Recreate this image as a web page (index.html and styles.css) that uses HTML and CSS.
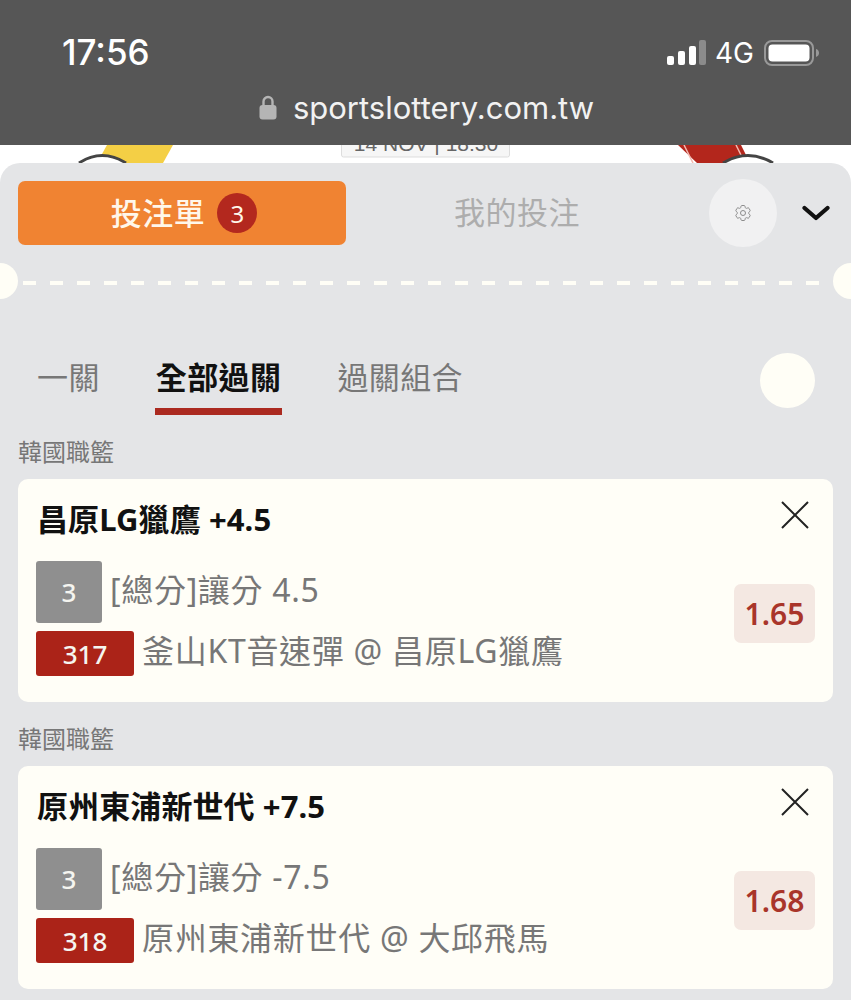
FILE: index.html
```html
<!DOCTYPE html>
<html lang="zh-Hant">
<head>
    <meta charset="UTF-8">
    <meta name="viewport" content="width=device-width, initial-scale=1.0">
    <title>sportslottery.com.tw</title>
    <link rel="stylesheet" href="styles.css">
</head>
<body>

    <!-- phone status bar and address -->
    <div class="phone-top">
        <div class="status">
            <div class="time">17:56</div>
            <div class="status-right">
                <svg class="signal" width="39" height="25" viewBox="0 0 39 25">
                    <rect x="0" y="16" width="7" height="9" rx="2" fill="#fff"/>
                    <rect x="11" y="11" width="7" height="14" rx="2" fill="#fff"/>
                    <rect x="22" y="6" width="7" height="19" rx="2" fill="#fff"/>
                    <rect x="32" y="0" width="7" height="25" rx="2" fill="#8b8b8b"/>
                </svg>
                <span class="network">4G</span>
                <svg class="battery" width="55" height="26" viewBox="0 0 55 26">
                    <rect x="1" y="1" width="48" height="24" rx="7" fill="none" stroke="#999" stroke-width="2"/>
                    <rect x="4.500" y="4.500" width="41" height="17" rx="4" fill="#fff"/>
                    <path d="M52 9c2 .6 3 2.200 3 4s-1 3.400-3 4z" fill="#999"/>
                </svg>
            </div>
        </div>
        <div class="address">
            <svg class="lock" width="18" height="25" viewBox="0 0 18 25">
                <path d="M4.500 11V6.500a4.500 4.500 0 0 1 9 0V11" fill="none" stroke="#b5b5b5" stroke-width="2.400"/>
                <rect x="0.500" y="10" width="17" height="14.500" rx="3" fill="#b5b5b5"/>
            </svg>
            <span>sportslottery.com.tw</span>
        </div>
    </div>

    <!-- bit of the match page showing behind the sheet -->
    <div class="behind">
        <svg width="851" height="18" viewBox="0 0 851 18">
            <polygon points="107,0 173,0 163,18 97,18" fill="#f4cf45"/>
            <path d="M79 18Q102 3 126 18" fill="#fff" stroke="#444" stroke-width="3"/>
            <rect x="341.500" y="-10" width="168" height="22" rx="2" fill="#f6f6f6" stroke="#ddd"/>
            <text class="behind-date" x="426" y="6" text-anchor="middle">14 NOV | 18:30</text>
            <polygon points="678,0 741,0 750,18 697,18" fill="#b3261c"/>
            <path d="M684 0L693 18M736 0L745 18" stroke="#f2b9b0" stroke-width="1.500"/>
            <path d="M723 18Q748 3 773 18" fill="#fff" stroke="#444" stroke-width="3"/>
        </svg>
    </div>

    <div class="sheet">
        <div class="sheet-head">
            <button class="slip-tab"><span class="slip-label">投注單</span> <span class="count">3</span></button>
            <div class="my-bets">我的投注</div>
            <div class="gear">
                <svg width="20" height="20" viewBox="0 0 24 24" fill="none" stroke="#8c8c8c" stroke-width="1.200">
                    <path d="M9.594 3.940c.090-.542.560-.940 1.110-.940h2.593c.550 0 1.020.398 1.110.940l.213 1.281c.063.374.313.686.645.870.074.040.147.083.220.127.325.196.720.257 1.075.124l1.217-.456a1.125 1.125 0 0 1 1.370.490l1.296 2.247a1.125 1.125 0 0 1-.260 1.431l-1.003.827c-.293.241-.438.613-.430.992a7.723 7.723 0 0 1 0 .255c-.008.378.137.750.430.991l1.004.827c.424.350.534.955.260 1.430l-1.298 2.247a1.125 1.125 0 0 1-1.369.491l-1.217-.456c-.355-.133-.750-.072-1.076.124a6.470 6.470 0 0 1-.220.128c-.331.183-.581.495-.644.869l-.213 1.281c-.090.543-.560.940-1.110.940h-2.594c-.550 0-1.019-.398-1.110-.940l-.213-1.281c-.062-.374-.312-.686-.644-.870a6.520 6.520 0 0 1-.220-.127c-.325-.196-.720-.257-1.076-.124l-1.217.456a1.125 1.125 0 0 1-1.369-.490l-1.297-2.247a1.125 1.125 0 0 1 .260-1.431l1.004-.827c.292-.240.437-.613.430-.991a6.932 6.932 0 0 1 0-.255c.007-.380-.138-.751-.430-.992l-1.004-.827a1.125 1.125 0 0 1-.260-1.430l1.297-2.247a1.125 1.125 0 0 1 1.370-.491l1.216.456c.356.133.751.072 1.076-.124.072-.044.146-.086.220-.128.332-.183.582-.495.644-.869l.214-1.280Z"/>
                    <circle cx="12" cy="12" r="3"/>
                </svg>
            </div>
            <svg class="chevron" width="28" height="16" viewBox="0 0 28 16">
                <path d="M2.500 3L14 13L25.500 3" fill="none" stroke="#111" stroke-width="4.200" stroke-linecap="round" stroke-linejoin="round"/>
            </svg>
        </div>

        <div class="tear">
            <span class="notch notch-left"></span>
            <span class="notch notch-right"></span>
        </div>

        <div class="bet-tabs">
            <div class="bet-tab">一關</div>
            <div class="bet-tab active">全部過關</div>
            <div class="bet-tab">過關組合</div>
            <div class="dot"></div>
        </div>

        <div class="league">韓國職籃</div>
        <div class="card">
            <div class="card-title">昌原LG獵鷹 +4.5</div>
            <svg class="close" width="30" height="30" viewBox="0 0 30 30">
                <path d="M2 2L28 28M28 2L2 28" stroke="#222" stroke-width="2"/>
            </svg>
            <div class="card-body">
                <div class="card-info">
                    <div class="info-row">
                        <span class="tag-grey">3</span>
                        <span class="info-text">[總分]讓分 4.5</span>
                    </div>
                    <div class="info-row">
                        <span class="tag-red">317</span>
                        <span class="info-text">釜山KT音速彈 @ 昌原LG獵鷹</span>
                    </div>
                </div>
                <div class="odds">1.65</div>
            </div>
        </div>

        <div class="league">韓國職籃</div>
        <div class="card">
            <div class="card-title">原州東浦新世代 +7.5</div>
            <svg class="close" width="30" height="30" viewBox="0 0 30 30">
                <path d="M2 2L28 28M28 2L2 28" stroke="#222" stroke-width="2"/>
            </svg>
            <div class="card-body">
                <div class="card-info">
                    <div class="info-row">
                        <span class="tag-grey">3</span>
                        <span class="info-text">[總分]讓分 -7.5</span>
                    </div>
                    <div class="info-row">
                        <span class="tag-red">318</span>
                        <span class="info-text">原州東浦新世代 @ 大邱飛馬</span>
                    </div>
                </div>
                <div class="odds">1.68</div>
            </div>
        </div>
    </div>

</body>
</html>
```

FILE: styles.css
```css
* {
    box-sizing: border-box;
}

html, body {
    margin: 0;
    padding: 0;
}

body {
    width: 851px;
    height: 1000px;
    overflow: hidden;
    background-color: #fff;
    font-family: "Noto Sans", "Noto Sans CJK TC", sans-serif;
}

.phone-top {
    height: 145px;
    background-color: #565656;
    color: #fff;
}

.status {
    display: flex;
    justify-content: space-between;
    align-items: center;
    height: 80px;
    padding: 25px 32px 0 62px;
}

.time {
    font-family: Inter, sans-serif;
    font-size: 35px;
    font-weight: 500;
    margin-top: -2px;
}

.status-right {
    display: flex;
    align-items: center;
    gap: 10px;
}

.signal {
    margin-right: -1px;
}

.network {
    font-family: Inter, sans-serif;
    font-size: 28px;
}

.address {
    display: flex;
    justify-content: center;
    align-items: center;
    gap: 16px;
    padding: 9px 0 0 2px;
    font-family: Inter, sans-serif;
    font-size: 31px;
    color: #f2f2f2;
}

.behind {
    height: 18px;
    overflow: hidden;
}

.behind svg {
    display: block;
}

.behind-date {
    font-family: "Liberation Sans", sans-serif;
    font-size: 21px;
    fill: #666;
}

.sheet {
    height: 837px;
    overflow: hidden;
    padding: 0 18px;
    background-color: #e4e5e7;
    border-radius: 20px 20px 0 0;
}

.sheet-head {
    display: flex;
    align-items: center;
    height: 100px;
}

.slip-tab {
    display: flex;
    justify-content: center;
    align-items: center;
    gap: 12px;
    width: 328px;
    height: 64px;
    padding: 0 0 0 4px;
    border: none;
    border-radius: 7px;
    background-color: #f08332;
    color: #fff7ea;
    font-family: inherit;
    font-size: 31px;
    font-weight: 500;
}

.slip-label {
    margin-bottom: 4px;
    letter-spacing: 0.5px;
}

.count {
    display: flex;
    justify-content: center;
    align-items: center;
    width: 40px;
    height: 40px;
    border-radius: 50%;
    background-color: #b3281e;
    font-size: 24px;
    font-weight: 400;
}

.my-bets {
    width: 342px;
    padding-bottom: 6px;
    text-align: center;
    color: #adadad;
    font-size: 31px;
    font-weight: 400;
    letter-spacing: 0.5px;
}

.gear {
    display: flex;
    justify-content: center;
    align-items: center;
    width: 68px;
    height: 68px;
    margin-left: 21px;
    border-radius: 50%;
    background-color: #f1f1f2;
}

.chevron {
    margin-left: 25px;
}

/* dashed tear line with the two punched holes */
.tear {
    position: relative;
    height: 4px;
    margin: 18px 0 0 5px;
    background: repeating-linear-gradient(90deg, #fffef6 0, #fffef6 13px, transparent 13px, transparent 27px);
}

.notch {
    position: absolute;
    top: -18px;
    width: 36px;
    height: 36px;
    border-radius: 50%;
    background-color: #fffef6;
}

.notch-left {
    left: -41px;
}

.notch-right {
    right: -36px;
}

.bet-tabs {
    display: flex;
    align-items: flex-start;
    gap: 56px;
    height: 130px;
    padding: 67px 0 0 19px;
}

.bet-tab {
    height: 63px;
    color: #777;
    font-size: 31px;
    letter-spacing: 0.4px;
    line-height: 50px;
}

.bet-tab.active {
    margin: 0 -1px;
    padding: 0 1px;
    border-bottom: 7px solid #ab2a20;
    color: #111;
    font-weight: 700;
}

.dot {
    width: 55px;
    height: 55px;
    margin: 1px 18px 0 auto;
    border-radius: 50%;
    background-color: #fffef6;
}

.league {
    height: 64px;
    padding-top: 20px;
    color: #777;
    font-size: 24px;
    line-height: 34px;
}

.card {
    position: relative;
    height: 223px;
    padding: 18px 18px 0 18px;
    border-radius: 10px;
    background-color: #fffef7;
}

.card-title {
    height: 64px;
    padding-left: 1px;
    color: #111;
    font-size: 31px;
    font-weight: 700;
    letter-spacing: 0.1px;
    line-height: 44px;
}

.close {
    position: absolute;
    top: 21px;
    right: 23px;
}

.card-body {
    display: flex;
    justify-content: space-between;
    align-items: flex-start;
}

.info-row {
    display: flex;
    align-items: center;
    gap: 8px;
    margin-bottom: 8px;
}

.tag-grey, .tag-red {
    display: flex;
    justify-content: center;
    align-items: center;
    border-radius: 3px;
    color: #f5f5f0;
    font-size: 26px;
    font-weight: 500;
}

.tag-grey {
    width: 66px;
    height: 62px;
    background-color: #8f8f8f;
}

.tag-red {
    width: 98px;
    height: 45px;
    background-color: #ab2318;
}

.info-text {
    padding-bottom: 5px;
    color: #777;
    font-size: 32px;
    letter-spacing: 0.7px;
    line-height: 40px;
}

.odds {
    display: flex;
    justify-content: center;
    align-items: center;
    width: 81px;
    height: 59px;
    margin-top: 23px;
    border-radius: 7px;
    background-color: #f4e8e2;
    color: #a9352a;
    font-size: 30px;
    font-weight: 600;
}
```
